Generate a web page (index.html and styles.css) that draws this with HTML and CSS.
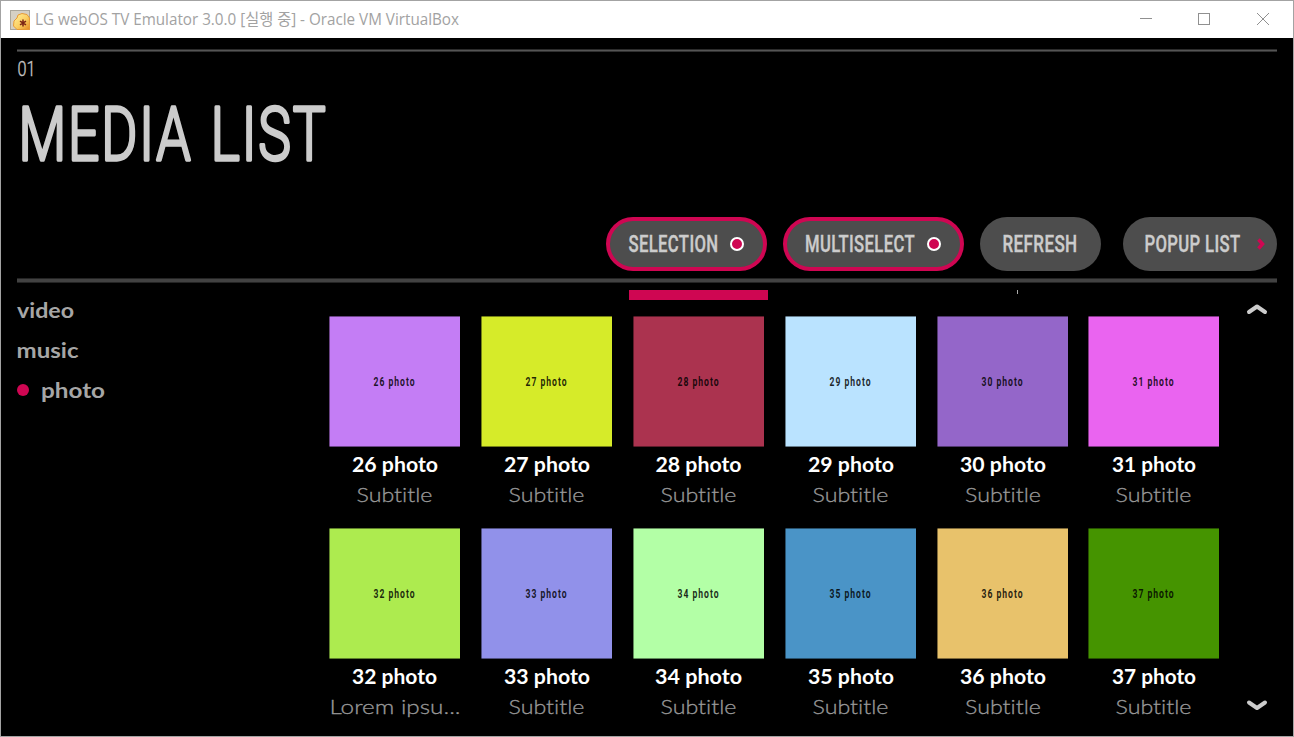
FILE: index.html
```
<!DOCTYPE html>
<html lang="ko">
<head>
<meta charset="utf-8">
<title>LG webOS TV Emulator</title>
<link rel="stylesheet" href="styles.css">
</head>
<body>
<div class="window">
  <header class="titlebar">
    <svg class="appicon" width="20" height="20" viewBox="0 0 20 20">
      <defs><linearGradient id="g" x1="0" y1="0" x2="1" y2="1"><stop offset="0" stop-color="#fff3a0"/><stop offset=".55" stop-color="#fbcf62"/><stop offset="1" stop-color="#e58a22"/></linearGradient></defs>
      <rect x=".5" y=".5" width="19" height="19" fill="#d5d0c4" stroke="#aaa69b"/>
      <path d="M3.500 16 4 11 7 8 8 5 12 3.500 17 4.500 19.500 8V19.500H7Z" fill="url(#g)" stroke="#e79a35" stroke-linejoin="round"/>
      <path d="M13 9.500v7M10 11.200l6 3.600M16 11.200l-6 3.600" stroke="#7c2414" stroke-width="1.500"/>
    </svg>
    <svg class="caption" width="428" height="37"><text x="0" y="24" textLength="424" lengthAdjust="spacingAndGlyphs">LG webOS TV Emulator 3.0.0 [실행 중] - Oracle VM VirtualBox</text></svg>
    <svg class="controls" width="130" height="13" viewBox="0 0 130 13" shape-rendering="crispEdges"><path d="M0 5.500h12M58.500.500h11v11h-11zM117 0l12 12M129 0l-12 12"/></svg>
  </header>
  <main class="screen">
    <div class="topline"></div>
    <svg class="index" width="40" height="48"><text x=".5" y="23.500" textLength="18" lengthAdjust="spacingAndGlyphs">01</text></svg>
    <svg class="heading" width="330" height="75"><text x="-1.500" y="60" textLength="309" lengthAdjust="spacingAndGlyphs">MEDIA LIST</text></svg>
    <div class="toolbar">
      <button class="btn on sel"><svg width="90" height="24"><text x=".5" y="21" textLength="90" lengthAdjust="spacingAndGlyphs">SELECTION</text></svg><i class="led"></i></button>
      <button class="btn on multi"><svg width="110" height="24"><text x="0" y="21" textLength="110" lengthAdjust="spacingAndGlyphs">MULTISELECT</text></svg><i class="led"></i></button>
      <button class="btn refresh"><svg width="76" height="24"><text x="-.5" y="21" textLength="75" lengthAdjust="spacingAndGlyphs">REFRESH</text></svg></button>
      <button class="btn popup"><svg width="97" height="24"><text x="-.5" y="21" textLength="96" lengthAdjust="spacingAndGlyphs">POPUP LIST</text></svg><svg class="more" width="8" height="12" viewBox="0 0 8 12"><path d="M1.500 1.500 5.500 6 1.500 10.500"/></svg></button>
    </div>
    <div class="divider"></div>
    <div class="content">
      <nav class="menu">
        <div class="item"><svg width="60" height="40"><text x="0" y="27.500" textLength="57" lengthAdjust="spacingAndGlyphs">video</text></svg></div>
        <div class="item"><svg width="64" height="40"><text x="-.5" y="27.500" textLength="62" lengthAdjust="spacingAndGlyphs">music</text></svg></div>
        <div class="item"><i class="dot"></i><svg width="66" height="40"><text x="0" y="27.500" textLength="64" lengthAdjust="spacingAndGlyphs">photo</text></svg></div>
      </nav>
      <div class="list">
        <div class="previous"><i class="selected"></i><i class="stem"></i></div>
        <div class="grid">
          <article><svg class="thumb c26"><text x="44.500" y="70" textLength="42" lengthAdjust="spacingAndGlyphs">26 photo</text></svg><svg class="label"><text class="name" x="23" y="24.500" textLength="86" lengthAdjust="spacingAndGlyphs">26 photo</text><text class="sub" x="27.500" y="55" textLength="76" lengthAdjust="spacingAndGlyphs">Subtitle</text></svg></article>
          <article><svg class="thumb c27"><text x="44.500" y="70" textLength="42" lengthAdjust="spacingAndGlyphs">27 photo</text></svg><svg class="label"><text class="name" x="23" y="24.500" textLength="86" lengthAdjust="spacingAndGlyphs">27 photo</text><text class="sub" x="27.500" y="55" textLength="76" lengthAdjust="spacingAndGlyphs">Subtitle</text></svg></article>
          <article><svg class="thumb c28"><text x="44.500" y="70" textLength="42" lengthAdjust="spacingAndGlyphs">28 photo</text></svg><svg class="label"><text class="name" x="22.500" y="24.500" textLength="86" lengthAdjust="spacingAndGlyphs">28 photo</text><text class="sub" x="27.500" y="55" textLength="76" lengthAdjust="spacingAndGlyphs">Subtitle</text></svg></article>
          <article><svg class="thumb c29"><text x="44.500" y="70" textLength="42" lengthAdjust="spacingAndGlyphs">29 photo</text></svg><svg class="label"><text class="name" x="23" y="24.500" textLength="86" lengthAdjust="spacingAndGlyphs">29 photo</text><text class="sub" x="27.500" y="55" textLength="76" lengthAdjust="spacingAndGlyphs">Subtitle</text></svg></article>
          <article><svg class="thumb c30"><text x="44.500" y="70" textLength="42" lengthAdjust="spacingAndGlyphs">30 photo</text></svg><svg class="label"><text class="name" x="23" y="24.500" textLength="86" lengthAdjust="spacingAndGlyphs">30 photo</text><text class="sub" x="28" y="55" textLength="76" lengthAdjust="spacingAndGlyphs">Subtitle</text></svg></article>
          <article><svg class="thumb c31"><text x="44.500" y="70" textLength="42" lengthAdjust="spacingAndGlyphs">31 photo</text></svg><svg class="label"><text class="name" x="24" y="24.500" textLength="84" lengthAdjust="spacingAndGlyphs">31 photo</text><text class="sub" x="27.500" y="55" textLength="76" lengthAdjust="spacingAndGlyphs">Subtitle</text></svg></article>
          <article><svg class="thumb c32"><text x="44.500" y="70" textLength="42" lengthAdjust="spacingAndGlyphs">32 photo</text></svg><svg class="label"><text class="name" x="23" y="24.500" textLength="85" lengthAdjust="spacingAndGlyphs">32 photo</text><text class="sub" x=".5" y="55" textLength="131" lengthAdjust="spacingAndGlyphs">Lorem ipsu...</text></svg></article>
          <article><svg class="thumb c33"><text x="44.500" y="70" textLength="42" lengthAdjust="spacingAndGlyphs">33 photo</text></svg><svg class="label"><text class="name" x="23" y="24.500" textLength="86" lengthAdjust="spacingAndGlyphs">33 photo</text><text class="sub" x="27.500" y="55" textLength="76" lengthAdjust="spacingAndGlyphs">Subtitle</text></svg></article>
          <article><svg class="thumb c34"><text x="44.500" y="70" textLength="42" lengthAdjust="spacingAndGlyphs">34 photo</text></svg><svg class="label"><text class="name" x="22" y="24.500" textLength="87" lengthAdjust="spacingAndGlyphs">34 photo</text><text class="sub" x="27.500" y="55" textLength="76" lengthAdjust="spacingAndGlyphs">Subtitle</text></svg></article>
          <article><svg class="thumb c35"><text x="44.500" y="70" textLength="42" lengthAdjust="spacingAndGlyphs">35 photo</text></svg><svg class="label"><text class="name" x="23" y="24.500" textLength="86" lengthAdjust="spacingAndGlyphs">35 photo</text><text class="sub" x="27.500" y="55" textLength="76" lengthAdjust="spacingAndGlyphs">Subtitle</text></svg></article>
          <article><svg class="thumb c36"><text x="44.500" y="70" textLength="42" lengthAdjust="spacingAndGlyphs">36 photo</text></svg><svg class="label"><text class="name" x="23" y="24.500" textLength="86" lengthAdjust="spacingAndGlyphs">36 photo</text><text class="sub" x="28" y="55" textLength="76" lengthAdjust="spacingAndGlyphs">Subtitle</text></svg></article>
          <article><svg class="thumb c37"><text x="44.500" y="70" textLength="42" lengthAdjust="spacingAndGlyphs">37 photo</text></svg><svg class="label"><text class="name" x="24" y="24.500" textLength="84" lengthAdjust="spacingAndGlyphs">37 photo</text><text class="sub" x="27.500" y="55" textLength="76" lengthAdjust="spacingAndGlyphs">Subtitle</text></svg></article>
        </div>
      </div>
      <div class="pager">
        <svg width="20" height="12" viewBox="0 0 20 12"><path d="M2 9 10 3.500 18 9"/></svg>
        <svg width="20" height="12" viewBox="0 0 20 12"><path d="M2 2.500 10 8 18 2.500"/></svg>
      </div>
    </div>
  </main>
</div>
</body>
</html>
```
FILE: styles.css
```
* { box-sizing: border-box; }
body { margin: 0; width: 1294px; height: 737px; overflow: hidden; background: #a3a3a3; }
svg { display: block; flex: none; overflow: visible; }
.window { width: 1294px; height: 737px; border: 1px solid #a3a3a3; background: #000; }
.titlebar { height: 37px; background: #fff; display: flex; align-items: center; padding: 0 23px 0 9px; }
.caption { margin-left: 5px; font: 15.500px "Open Sans", "Noto Sans CJK KR", sans-serif; fill: #a2a2a2; }
.controls { margin-left: auto; fill: none; stroke: #909090; stroke-width: 1; }
.screen { height: 698px; padding: 11px 16px 0; display: flex; flex-direction: column; overflow: hidden; }
.topline { height: 3px; flex: none; background: linear-gradient(#2c2c2c 0 1px, #555 1px 2px, #303030 2px); }
.index { font: 300 21px Roboto, sans-serif; fill: #c4c4c4; stroke: #c4c4c4; stroke-width: .4px; }
.heading { font: 300 74px Roboto, sans-serif; fill: #ccc; stroke: #ccc; stroke-width: 3.400px; stroke-linejoin: round; margin-left: 3px; word-spacing: 4px; letter-spacing: 2.500px; }
.toolbar { margin-top: 41.500px; height: 54px; display: flex; justify-content: flex-end; flex: none; }
.btn { height: 54px; border: 0; border-radius: 27px; background: #4d4d4d; display: flex; align-items: center; padding: 0 0 2px 22px; font: 500 23.500px Roboto, sans-serif; letter-spacing: .5px; fill: #ccc; color: #ccc; }
.btn text { stroke: #ccc; stroke-width: .4px; }
.btn.on { border: 4px solid #cf0652; padding-left: 18px; }
.sel { width: 161px; margin-right: 16px; }
.multi { width: 180.500px; margin-right: 16px; }
.refresh { width: 121.500px; margin-right: 21.500px; padding-left: 23px; }
.popup { width: 154.500px; }
.led { width: 14px; height: 14px; border: 2px solid #fff; border-radius: 50%; background: #cf0652; margin: 2px 0 0 12px; }
.more { fill: none; stroke: #cf0652; stroke-width: 3.500; margin: 3px 0 0 15px; }
.divider { height: 5px; margin-top: 7.500px; flex: none; background: linear-gradient(#242424 0 1px, #424242 1px 4px, #242424 4px); }
.content { display: flex; padding-top: 7px; height: 454px; flex: none; }
.menu { width: 312px; flex: none; font: bold 20.500px Lato, sans-serif; fill: #a6a6a6; }
.item { display: flex; align-items: center; height: 40px; }
.dot { width: 12px; height: 12px; border-radius: 50%; background: #cf0652; margin-right: 12px; }
.list { width: 890px; flex: none; }
.previous { height: 26px; display: flex; align-items: flex-start; }
.selected { width: 138.500px; height: 10px; background: #cf0652; margin-left: 300px; }
.stem { width: 1px; height: 4px; background: #aaa; margin-left: 249.500px; }
.grid { display: grid; grid-template-columns: repeat(6, 131px); column-gap: 20.900px; grid-auto-rows: 212px; }
.thumb { width: 131px; height: 131px; font: bold 13px Roboto, sans-serif; fill: rgba(0,0,0,.85); letter-spacing: 1.500px; box-shadow: inset 1px 0 rgba(0,0,0,.45), inset 0 1px rgba(0,0,0,.45), inset 0 -1px rgba(0,0,0,.45); }
.label { width: 131px; height: 81px; }
.name { font: bold 20px Lato, sans-serif; fill: #fff; }
.sub { font: 300 20.500px Lato, sans-serif; fill: #999; stroke: #999; stroke-width: .3px; font-variant-ligatures: none; }
.pager { margin-left: auto; width: 30px; height: 409px; margin-top: 13px; display: flex; flex-direction: column; justify-content: space-between; fill: none; stroke: #ccc; stroke-width: 4; stroke-linecap: round; stroke-linejoin: round; }
.c26 { background: #c47df5; }
.c27 { background: #d6eb29; }
.c28 { background: #ab334f; }
.c29 { background: #bae3ff; }
.c30 { background: #9466c9; }
.c31 { background: #ea64f0; }
.c32 { background: #adeb4f; }
.c33 { background: #9191ea; }
.c34 { background: #b3ffa6; }
.c35 { background: #4a94c7; }
.c36 { background: #e8c26b; }
.c37 { background: #459400; }
```
